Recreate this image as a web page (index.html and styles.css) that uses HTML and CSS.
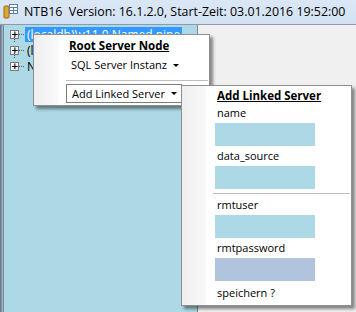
FILE: index.html
```html
<!DOCTYPE html>
<html lang="de">
<head>
    <meta charset="UTF-8">
    <title>NTB16</title>
    <link rel="stylesheet" href="styles.css">
</head>
<body>

<div class="window">
    <!-- Title bar -->
    <div class="titlebar">
        <svg class="app-icon" width="16" height="16" viewBox="0 0 16 16">
            <rect x="1" y="3" width="5" height="12" rx="1" fill="#e0a630" stroke="#9a6a12" stroke-width="1"/>
            <rect x="6.5" y="1.5" width="8" height="9" fill="#ffffff" stroke="#5b7fb0" stroke-width="1"/>
            <line x1="6.5" y1="4.5" x2="14.5" y2="4.5" stroke="#5b7fb0"/>
            <line x1="6.5" y1="7.5" x2="14.5" y2="7.5" stroke="#5b7fb0"/>
            <line x1="10.5" y1="4.5" x2="10.5" y2="10.5" stroke="#5b7fb0"/>
        </svg>
        <span class="title-text">NTB16&nbsp; Version: 16.1.2.0, Start-Zeit: 03.01.2016 19:52:00</span>
    </div>

    <!-- Client area -->
    <div class="client">
        <div class="frame-left"></div>
        <div class="tree">
            <div class="tree-row">
                <span class="expander">+</span><span class="dots"></span>
                <span class="node selected">(localdb)\v11.0 Named pipe</span>
            </div>
            <div class="tree-row">
                <span class="expander">+</span><span class="dots"></span>
                <span class="node">(localdb)\Projects</span>
            </div>
            <div class="tree-row">
                <span class="expander">+</span><span class="dots"></span>
                <span class="node">NTB16</span>
            </div>
        </div>
        <div class="panel"></div>
    </div>
</div>

<!-- Context menu -->
<div class="menu menu-root">
    <div class="menu-title">Root Server Node</div>
    <div class="menu-item">SQL Server Instanz <span class="arrow"></span></div>
    <div class="menu-sep"></div>
    <div class="menu-item active">Add Linked Server <span class="arrow"></span></div>
</div>

<!-- Submenu -->
<div class="menu menu-sub">
    <div class="menu-title">Add Linked Server</div>
    <div class="field-label first">name</div>
    <div class="field-box"></div>
    <div class="field-label">data_source</div>
    <div class="field-box"></div>
    <div class="menu-sep"></div>
    <div class="field-label after-sep">rmtuser</div>
    <div class="field-box"></div>
    <div class="field-label">rmtpassword</div>
    <div class="field-box password"></div>
    <div class="field-label last">speichern ?</div>
</div>

</body>
</html>
```

FILE: styles.css
```css
* {
    margin: 0;
    padding: 0;
    box-sizing: border-box;
}

body {
    width: 356px;
    height: 312px;
    overflow: hidden;
    position: relative;
    font-family: 'Open Sans', 'Liberation Sans', sans-serif;
    font-size: 11px;
    color: #000;
    background: #f0f0f0;
}

.window {
    display: flex;
    flex-direction: column;
    height: 312px;
}

/* Title bar */
.titlebar {
    height: 25px;
    display: flex;
    align-items: center;
    padding-left: 3px;
    background: linear-gradient(to bottom, #dbe7f5, #d3e2f2);
    border-bottom: 1px solid #8c9aab;
}

.app-icon {
    margin-right: 5px;
    margin-top: -2px;
}

.title-text {
    font-size: 12.4px;
    color: #000;
    margin-top: -1px;
}

/* Client area */
.client {
    flex: 1;
    display: flex;
}

.frame-left {
    width: 3px;
    background: linear-gradient(to right, #5a6f86, #a9bfd6);
}

.tree {
    width: 195px;
    background: #add8e6;
    border-left: 1px solid #828790;
    border-right: 1px solid #828790;
    padding-top: 1px;
    padding-left: 6px;
    font-size: 12px;
}

.panel {
    flex: 1;
    background: #f0f0f0;
}

.tree-row {
    height: 16px;
    display: flex;
    align-items: center;
    position: relative;
}

.tree-row + .tree-row::before {
    content: "";
    position: absolute;
    left: 4px;
    top: -7px;
    height: 7px;
    border-left: 1px dotted #555;
}

.expander {
    width: 9px;
    height: 9px;
    border: 1px solid #7a7a7a;
    background: linear-gradient(135deg, #ffffff, #e4e4e4);
    font-family: 'DejaVu Sans', sans-serif;
    font-size: 9px;
    line-height: 7px;
    text-align: center;
    font-weight: bold;
}

.dots {
    width: 5px;
    border-top: 1px dotted #555;
}

.node {
    padding: 0 2px;
    margin-left: 1px;
    line-height: 15px;
    white-space: nowrap;
}

.node.selected {
    background: #3399ff;
    color: #fff;
}

/* Menus */
.menu {
    position: absolute;
    border: 1px solid #8f8f8f;
    box-shadow: 3px 3px 3px rgba(0, 0, 0, 0.45);
    background: linear-gradient(to right, #eeeeee, #fafafa 24px, #ffffff 25px);
    white-space: nowrap;
}

.menu-root {
    left: 33px;
    top: 34px;
    width: 177px;
    height: 72px;
    padding-top: 3px;
}

.menu-title {
    font-size: 11.5px;
    font-weight: bold;
    text-decoration: underline;
    line-height: 16px;
    padding-left: 35px;
}

.menu-item {
    line-height: 16px;
    padding-left: 37px;
    margin-top: 3px;
    display: flex;
    align-items: center;
}

.arrow {
    display: inline-block;
    margin-left: 6px;
    border-left: 3px solid transparent;
    border-right: 3px solid transparent;
    border-top: 3px solid #000;
}

.menu-root .menu-sep {
    margin: 7px 1px 0 32px;
}

.menu-sep {
    height: 1px;
    background: #bdbdbd;
}

.menu-item.active {
    margin: 3px 0 0 32px;
    width: 116px;
    height: 19px;
    padding-left: 5px;
    border: 1px solid #7d7d7d;
}

.menu-sub {
    left: 181px;
    top: 85px;
    width: 171px;
    height: 221px;
    padding-top: 2px;
}

.menu-sub .menu-sep {
    margin: 4px 1px 0 31px;
}

.field-label {
    line-height: 16px;
    padding-left: 35px;
    padding-top: 2px;
}

.field-label.first {
    padding-top: 1px;
}

.field-label.after-sep {
    padding-top: 3px;
}

.field-label.last {
    padding-top: 4px;
}

.field-box {
    margin: 2px 0 0 33px;
    width: 100px;
    height: 23px;
    background: #add8e6;
}

.field-box.password {
    background: #b0c4de;
}
```
